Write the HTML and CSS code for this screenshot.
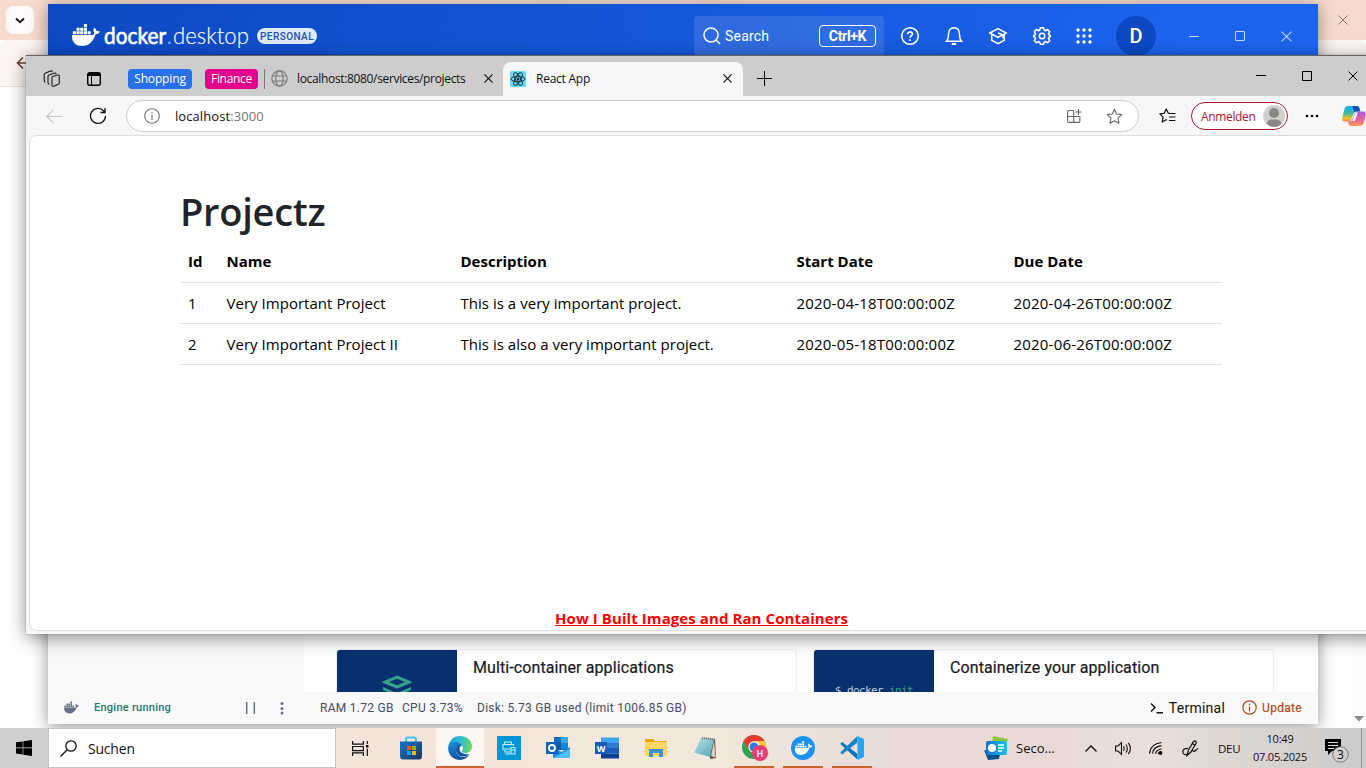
FILE: index.html
```html
<!DOCTYPE html>
<html lang="de">
<head>
<meta charset="utf-8">
<title>React App</title>
<link rel="stylesheet" href="styles.css">
</head>
<body>
<svg class="defs" width="0" height="0">
  <defs>
    <symbol id="whale" viewBox="0 0 28 24">
      <path d="M0 12h21c1-.6 1.400-1.400 1.300-2.200C21 8 21.200 6 22.400 4.800c1.400.8 2 2 2.100 3.200 1.300-.3 2.600 0 3.500.6-.7 1.700-2.200 2.600-4.400 2.700C21.400 18.500 17 23 10 23 3.600 23-.3 19.400 0 12z"/>
      <path d="M.8 8.300h3.100v3H.8zM4.500 8.300h3.100v3H4.500zM8.200 8.300h3.100v3H8.200zM11.900 8.300H15v3h-3.100zM15.600 8.300h3.100v3h-3.100zM4.500 4.700h3.100v3H4.500zM8.200 4.700h3.100v3H8.200zM11.900 4.700H15v3h-3.100zM11.900 1H15v3h-3.100z"/>
    </symbol>
    <symbol id="x" viewBox="0 0 10 10"><path d="M.5.5l9 9M9.500.5l-9 9" fill="none" stroke="currentColor"/></symbol>
  </defs>
</svg>
<div class="desktop">

  <div class="chrome">
    <div class="chrome-tabs">
      <span class="chrome-chevron"><svg width="10" height="7" viewBox="0 0 10 7"><path d="M1 1.500l4 3.700 4-3.700" fill="none" stroke="#1f1a1a" stroke-width="2"/></svg></span>
      <svg class="chrome-close" width="10" height="10"><use href="#x"/></svg>
    </div>
    <div class="chrome-bar">
      <svg width="14" height="14" viewBox="0 0 14 14"><path d="M14 7H2M7 1.500L1.500 7 7 12.500" fill="none" stroke="#6b4a40" stroke-width="1.700"/></svg>
    </div>
    <div class="chrome-page"><span class="chrome-scroll"><svg width="10" height="6"><path d="M0 0h10L5 5.500z" fill="#8a8a8a"/></svg></span></div>
  </div>

  <div class="docker">
    <header class="dk-head">
      <svg class="dk-logo" width="182" height="34" viewBox="0 0 182 34">
        <use href="#whale" x="0" y="4" width="28" height="24" fill="#fff"/>
        <g fill="#fff" class="logo-text">
          <text x="32" y="24.500" textLength="62" lengthAdjust="spacingAndGlyphs" class="logo-strong">docker</text>
          <text x="94.500" y="24.500" fill="#7fa8f5">.</text>
          <text x="101" y="24.500" textLength="76" lengthAdjust="spacingAndGlyphs">desktop</text>
        </g>
      </svg>
      <span class="dk-badge">PERSONAL</span>
      <div class="dk-search">
        <svg width="18" height="18" viewBox="0 0 18 18" fill="none" stroke="#fff" stroke-width="1.500"><circle cx="8" cy="8" r="7"/><path d="M13 13l4 4"/></svg>
        <span>Search</span><kbd>Ctrl+K</kbd>
      </div>
      <div class="dk-tools">
        <span class="dk-cell"><svg width="20" height="20" viewBox="0 0 20 20" fill="none" stroke="#fff" stroke-width="1.600"><circle cx="10" cy="10" r="8.300"/><path d="M7.600 8.200c0-3 4.800-3 4.800-.2 0 1.800-2.400 1.900-2.400 3.700M10 13.200V15"/></svg></span>
        <span class="dk-cell"><svg width="20" height="20" viewBox="0 0 20 20" fill="none" stroke="#fff" stroke-width="1.500"><path d="M2.500 15.200h15c-1.500-1.500-2-3-2-6.500 0-4.500-2.200-7-5.500-7s-5.500 2.500-5.500 7c0 3.500-.5 5-2 6.500z"/><path d="M7.800 18h4.400" stroke-width="2"/></svg></span>
        <span class="dk-cell"><svg width="20" height="20" viewBox="0 0 20 20" fill="none" stroke="#fff" stroke-width="1.500"><path d="M1.800 7L10 2.500 18.200 7 10 11.500zM3.700 8.500v5.700L10 17.700l6.300-3.500V8.500M10 7l5 2v3.500"/></svg></span>
        <span class="dk-cell"><svg width="20" height="20" viewBox="0 0 20 20" fill="none" stroke="#fff" stroke-width="1.600"><path d="M8.400 1.800h3.200l.6 2.300 1.300.6 2-1.200 2.200 2.300-1.200 2 .5 1.200 1.300.4v1.400l-1.300.5-.5 1.300 1.200 2-2.200 2.200-2-1.200-1.300.6-.6 2H8.400l-.6-2-1.300-.6-2 1.200-2.200-2.200 1.200-2-.5-1.300-1.300-.5V9.400L3 9l.5-1.200-1.200-2 2.200-2.300 2 1.200 1.300-.6z" stroke-linejoin="round"/><circle cx="10" cy="10" r="2.700"/></svg></span>
        <span class="dk-cell dk-grid"><svg width="16" height="16" viewBox="0 0 16 16" stroke="#fff" stroke-width="3.400" stroke-linecap="round" stroke-dasharray="0 6"><path d="M2 2h12.100M2 8h12.100M2 14h12.100"/></svg></span>
        <span class="dk-avatar">D</span>
        <span class="dk-win"><svg width="10" height="10"><path d="M0 5.500h10" stroke="#c3d6fb"/></svg></span>
        <span class="dk-win"><svg width="10" height="10"><path d="M.5.500h9v9h-9z" fill="none" stroke="#c3d6fb"/></svg></span>
        <span class="dk-win"><svg width="11" height="11"><use href="#x"/></svg></span>
      </div>
    </header>
    <div class="dk-body">
      <div class="dk-side"></div>
      <div class="dk-main">
        <div class="dk-card"><div class="dk-thumb"><svg width="30" height="24" viewBox="0 0 30 24"><path d="M15 2l12 5-12 5L3 7z" fill="none" stroke="#35a08c" stroke-width="3"/><path d="M1 12l14 6 14-6v3l-14 6-14-6z" fill="#35a08c"/></svg></div><h3>Multi-container applications</h3></div>
        <div class="dk-card"><div class="dk-thumb dk-code"><code>$ docker <b>init</b></code></div><h3>Containerize your application</h3></div>
      </div>
    </div>
    <footer class="dk-foot">
      <svg class="dk-mini" width="15" height="13" fill="#667085"><use href="#whale"/></svg>
      <span class="dk-engine">Engine running</span>
      <svg class="dk-pause" width="12" height="12"><path d="M1.700 0v12M9.300 0v12" stroke="#667085" stroke-width="1.500"/></svg>
      <svg class="dk-more" width="4" height="14" fill="#667085"><circle cx="2" cy="2.500" r="1.500"/><circle cx="2" cy="7.500" r="1.500"/><circle cx="2" cy="12" r="1.500"/></svg>
      <span class="dk-ram">RAM 1.72 GB</span><span class="dk-cpu">CPU 3.73%</span><span class="dk-disk">Disk: 5.73 GB used (limit 1006.85 GB)</span>
      <svg class="dk-prompt" width="13" height="12" viewBox="0 0 13 12"><path d="M1 1.500l4 4-4 4M6.500 10.700H13" fill="none" stroke="#111" stroke-width="1.400"/></svg>
      <span class="dk-term">Terminal</span>
      <svg class="dk-info" width="15" height="15" viewBox="0 0 15 15"><circle cx="7.500" cy="7.500" r="6.700" fill="none" stroke="#b54a16" stroke-width="1.200"/><path d="M7.500 6.500v5M7.500 3.800v1.500" stroke="#b54a16" stroke-width="1.300"/></svg>
      <span class="dk-update">Update</span>
    </footer>
  </div>

  <div class="edge">
    <div class="ed-tabs">
      <svg class="ed-work" width="18" height="18" viewBox="0 0 18 18" fill="none" stroke="#1a1a1a" stroke-width="1.100" stroke-linejoin="round"><path d="M9.500 6.500L14.300 5q2-.3 2 1.500v6.200q0 1-1 1.500l-4.500 2q-1.800.5-1.800-1.200V7.800q0-1 .5-1.300zM6.500 14.300q-1.500-.1-1.500-1.600V6.500q0-1.200 1-1.600L11.500 3q1.200-.2 1.700 1M2.500 12.200Q1.200 12 1.200 10.500V5q0-1.300 1.300-1.900L7.500 1q1.300-.4 1.900.8"/></svg>
      <svg class="ed-panel" width="14" height="14" viewBox="0 0 14 14"><rect x=".7" y=".7" width="12.600" height="12.600" rx="2" fill="none" stroke="#000" stroke-width="1.400"/><path d="M1 1h12v3H1z"/><path d="M4.500 4v9" stroke="#000"/></svg>
      <span class="ed-chip">Shopping</span><span class="ed-chip pink">Finance</span>
      <div class="ed-tab1">
        <svg width="17" height="17" viewBox="0 0 17 17" fill="none" stroke="#7d7d7d" stroke-width="1.200"><circle cx="8.500" cy="8.500" r="7.700"/><ellipse cx="8.500" cy="8.500" rx="3.700" ry="7.700"/><path d="M1.500 6h14M1.500 11h14"/></svg>
        <span class="ed-title">localhost:8080/services/projects</span>
        <svg class="ed-x" width="9" height="9"><use href="#x"/></svg>
      </div>
      <div class="ed-tab2">
        <svg width="16" height="16" viewBox="0 0 16 16"><rect width="16" height="16" rx="1.500" fill="#61dafb"/><g fill="none" stroke="#20363e" stroke-width="1"><ellipse cx="8" cy="8" rx="7" ry="2.700"/><ellipse cx="8" cy="8" rx="7" ry="2.700" transform="rotate(60 8 8)"/><ellipse cx="8" cy="8" rx="7" ry="2.700" transform="rotate(120 8 8)"/></g><circle cx="8" cy="8" r="1.500" fill="#20363e"/></svg>
        <span class="ed-title react">React App</span>
        <svg class="ed-x" width="9" height="9"><use href="#x"/></svg>
      </div>
      <svg class="ed-plus" width="15" height="15"><path d="M7.500 0v15M0 7.500h15" stroke="#000"/></svg>
      <div class="ed-controls">
        <svg width="10" height="10"><path d="M0 4.500h10" stroke="#000"/></svg>
        <svg width="10" height="10"><rect x=".5" y=".5" width="9" height="9" rx=".7" fill="none" stroke="#000" stroke-width="1.100"/></svg>
        <svg width="10" height="10"><use href="#x"/></svg>
      </div>
    </div>
    <div class="ed-bar">
      <svg class="ed-back" width="17" height="15" viewBox="0 0 17 15"><path d="M16.500 7.500H1M7.500.800L.8 7.500l6.700 6.700" fill="none" stroke="#c4c4c4" stroke-width="1.100"/></svg>
      <svg class="ed-reload" width="18" height="18" viewBox="0 0 18 18"><path d="M16.500 9a7.500 7.500 0 1 1-2-5.200l1.500 1.400M16 1v4.500h-4.500" fill="none" stroke="#111" stroke-width="1.300"/></svg>
      <div class="ed-url">
        <svg width="16" height="16" viewBox="0 0 16 16"><circle cx="8" cy="8" r="7.300" fill="none" stroke="#707070" stroke-width="1.100"/><path d="M8 7v5M8 4v1.500" stroke="#707070" stroke-width="1.200"/></svg>
        <span class="ed-host">localhost<i>:3000</i></span>
        <svg class="ed-app" width="15" height="15" viewBox="0 0 15 15" fill="none" stroke="#666" stroke-width="1.100"><path d="M6.500 1.500H2q-1.400 0-1.400 1.400V12q0 1.400 1.400 1.400h9.500q1.400 0 1.400-1.400V7.500M.6 7.500h12.300M6.700 1.500v12M11.500 0v6M8.500 3h6"/></svg>
        <svg class="ed-star" width="17" height="17" viewBox="0 0 17 17"><path d="M8.500 1.300l2.200 4.700 5 .6-3.700 3.500 1 5.100-4.500-2.500L4 15.200l1-5.100L1.300 6.600l5-.6z" fill="none" stroke="#666" stroke-width="1.100" stroke-linejoin="round"/></svg>
      </div>
      <svg class="ed-favs" width="17" height="16" viewBox="0 0 17 16" fill="none" stroke="#111" stroke-width="1.200"><path d="M10.500 5.500L9.300 5 7.200.900 5.200 5.300.8 5.800l3.300 3.300-.9 5 3.900-2.300.9.500" stroke-linejoin="round"/><path d="M10 5.500h6.500M10 9h6.500M10 12.500h6.500"/></svg>
      <div class="ed-login"><span>Anmelden</span><svg width="22" height="22" viewBox="0 0 22 22"><circle cx="11" cy="11" r="11" fill="#d2d0ce"/><circle cx="11" cy="8" r="5" fill="#8a8886"/><path d="M3.500 18.500q1.500-4 5-4h5q3.500 0 5 4Q15 22 11 22t-7.500-3.500z" fill="#8a8886"/></svg></div>
      <svg class="ed-dots" width="14" height="4"><circle cx="2" cy="2" r="1.300"/><circle cx="7" cy="2" r="1.300"/><circle cx="12" cy="2" r="1.300"/></svg>
      <svg class="ed-copilot" width="24" height="22" viewBox="0 0 24 22">
        <defs><linearGradient id="cpa" x1="0" y1="0" x2="0" y2="1"><stop offset="0" stop-color="#19aaf1"/><stop offset=".5" stop-color="#48b99b"/><stop offset=".8" stop-color="#f4c220"/><stop offset="1" stop-color="#f27844"/></linearGradient><linearGradient id="cpb" x1="0" y1="0" x2="0" y2="1"><stop offset="0" stop-color="#a95be8"/><stop offset=".55" stop-color="#ed5e9a"/><stop offset="1" stop-color="#fba24d"/></linearGradient></defs>
        <path d="M6.500 1H15q1.700 0 2.300 2l1 3.500h-4q-2 0-2.600 2L9.500 14q-.7 2.500-2.700 2.500H3q-3.500 0-2.700-4l2-8Q3 1 6.500 1z" fill="url(#cpa)"/><path d="M10.500 1H15q1.700 0 2.300 2l1 3.500h-4q-1.300 0-2 1z" fill="#1550c0"/>
        <path d="M17 6.500h4q3.500 0 2.700 4l-2 7.500q-1 3-4.200 3H9q-2 0-2.500-2l-.8-2.500h2q2 0 2.600-2l2.200-6Q13.500 6.500 17 6.500z" fill="url(#cpb)"/><path d="M13.500 7.500h2.300l-3 8.500h-2.900q.8-.5 1.200-2z" fill="#fff"/>
      </svg>
    </div>
    <main class="page">
      <h1>Projectz</h1>
      <table>
        <colgroup><col class="c1"><col class="c2"><col class="c3"><col class="c4"><col></colgroup>
        <thead><tr><th>Id</th><th>Name</th><th>Description</th><th>Start Date</th><th>Due Date</th></tr></thead>
        <tbody>
          <tr><td>1</td><td>Very Important Project</td><td>This is a very important project.</td><td class="date">2020-04-18T00:00:00Z</td><td class="date">2020-04-26T00:00:00Z</td></tr>
          <tr><td>2</td><td>Very Important Project II</td><td>This is also a very important project.</td><td class="date">2020-05-18T00:00:00Z</td><td class="date">2020-06-26T00:00:00Z</td></tr>
        </tbody>
      </table>
      <a class="page-link" href="#">How I Built Images and Ran Containers</a>
    </main>
  </div>

  <div class="taskbar">
    <div class="tb-start"><svg width="16" height="16" viewBox="0 0 16 16"><path d="M0 2.300l6.700-.9v6.200H0zM7.300 1.300L16 0v7.600H7.300zM0 8.300h6.700v6.200L0 13.600zM7.300 8.300H16V16l-8.700-1.300z"/></svg></div>
    <div class="tb-search"><svg width="17" height="17" viewBox="0 0 17 17" fill="none" stroke="#111" stroke-width="1.300"><circle cx="11" cy="6" r="5.200"/><path d="M7.200 9.800L.5 16.500"/></svg><span>Suchen</span></div>
    <div class="tb-apps">
      <span class="tb-app view"><svg width="17" height="17" viewBox="0 0 17 17" fill="none" stroke="#111" stroke-width="1.200"><path d="M.6 1v3.200h10.800V1M.6 16v-3.200h10.800V16M.6 6.500h10.800v4.200H.6zM15.300 1v3M15.300 8.500V16"/><path d="M14 5h2.500v2.500H14z" fill="#111" stroke="none"/></svg></span>
      <span class="tb-app"><svg width="24" height="24" viewBox="0 0 24 24"><defs><linearGradient id="st" x1="0" y1="0" x2="1" y2="1"><stop stop-color="#0b76c8"/><stop offset="1" stop-color="#23355e"/></linearGradient></defs><path d="M7 7V3q0-1.500 1.500-1.500h7Q17 1.500 17 3v4" fill="none" stroke="#3cc4f5" stroke-width="2"/><path d="M1 5.500h22V20q0 3.500-3 3.500H4q-3 0-3-3.500z" fill="url(#st)"/><path d="M8 10h4v4H8z" fill="#f25022"/><path d="M13 10h4v4h-4z" fill="#7fba00"/><path d="M8 15h4v4H8z" fill="#00a4ef"/><path d="M13 15h4v4h-4z" fill="#ffb900"/></svg></span>
      <span class="tb-app active"><svg width="24" height="24" viewBox="0 0 24 24"><defs><linearGradient id="eg" x1="0" y1=".4" x2="1" y2=".5"><stop stop-color="#1b9de2"/><stop offset=".5" stop-color="#2fc0d0"/><stop offset="1" stop-color="#69d858"/></linearGradient><linearGradient id="eb" x1="0" y1="0" x2=".6" y2="1"><stop stop-color="#1a92dd"/><stop offset="1" stop-color="#104a96"/></linearGradient></defs><path d="M.2 11C1 4.500 6 0 12 0c7 0 12 5 12 10.500 0 4-3 6.500-6.500 6.500-2.500 0-4-.9-3.600-2 1.500-1.600 1.400-3.500.1-5C10 5.500 3 6 .2 11z" fill="url(#eg)"/><path d="M.1 12.500C0 8 4 5.800 7.800 6c3 0 5.200 1.500 6.200 3.700-3.500-1-6.300 1.300-6 5.300.4 4.500 5.500 7 9 5.800q2-.6 4.300-2C19 22 15.700 24 12 24 5.500 24 .2 19 .1 12.500z" fill="url(#eb)"/><path d="M8 14c-.3-3 2-5.300 5.500-4.600-1 .5-2 1.700-2 3.600 0 3.500 4 5.700 9.800 5-4 4-12.800 3.700-13.300-4z" fill="#0c59a4"/></svg></span>
      <span class="tb-app"><svg width="24" height="24" viewBox="0 0 24 24"><path d="M0 0h24v24H0z" fill="#0096d6"/><path d="M7.500 8V6h7v2M13 16H8v-3h5M6 14.500V8.500h10.500V10M8.500 18H13M14 11.500h4v6.500h-4zM14 14h4" fill="none" stroke="#c9edfb" stroke-width="1.100"/></svg></span>
      <span class="tb-app"><svg width="24" height="24" viewBox="0 0 24 24"><path d="M8 1h14v13H8z" fill="#0f6cbd"/><path d="M15 1h7v6h-7z" fill="#35a9ee"/><path d="M8 7h7v7H8z" fill="#1257a3"/><path d="M15 7h7v6h-7z" fill="#1484d7"/><path d="M7 11l8.500 5L24 11v11H7z" fill="#1a8fe0"/><path d="M7 22l17-9v9z" fill="#4fc1f5"/><path d="M0 6h12v12H0z" fill="#0a64b8"/><circle cx="6" cy="12" r="3" fill="none" stroke="#fff" stroke-width="1.800"/></svg></span>
      <span class="tb-app"><svg width="24" height="24" viewBox="0 0 24 24"><path d="M6 1.500h18v5.500H6z" fill="#41a5ee"/><path d="M6 7h18v5H6z" fill="#2b7cd3"/><path d="M6 12h18v5.500H6z" fill="#185abd"/><path d="M6 17.500h18v5H6z" fill="#103f91"/><path d="M0 6h12v12H0z" fill="#185abd"/><text x="6" y="15.700" text-anchor="middle" fill="#fff" class="ico-text">W</text></svg></span>
      <span class="tb-app"><svg width="22" height="20" viewBox="0 0 22 20"><path d="M0 1h8l2 2h12v15H0z" fill="#e6a700"/><path d="M0 4h22v14H0z" fill="#ffd866"/><path d="M4 19v-8h14v8h-4v-4H8v4z" fill="#3c92d6"/></svg></span>
      <span class="tb-app"><svg width="24" height="24" viewBox="0 0 24 24"><defs><linearGradient id="np" x1="0" y1="0" x2="1" y2="1"><stop stop-color="#c2e4e9"/><stop offset="1" stop-color="#4da4b4"/></linearGradient></defs><path d="M9 2l13 1 1 19-6 1z" fill="#57534b"/><path d="M21 5l1.500 16.500L18 20z" fill="#d9d2c2"/><path d="M8 2l13 1-4 18L1 17z" fill="url(#np)"/><path d="M1 17l16 4v2L1 18.500z" fill="#f0f0ea"/><path d="M9 2l13 1.500" stroke="#76736c" stroke-dasharray="1 1" stroke-width="2"/></svg></span>
      <span class="tb-app run"><svg width="28" height="26" viewBox="0 0 28 26"><g transform="translate(2)"><circle cx="12" cy="12" r="12" fill="#31a350"/><path d="M1.600 6A12 12 0 0 1 22.400 6H12L7 15z" fill="#e33b2e"/><path d="M12 6h10.400A12 12 0 0 1 12 24l5-9z" fill="#fcc934"/><circle cx="12" cy="12" r="5.700" fill="#fff"/><circle cx="12" cy="12" r="4.500" fill="#2f79e8"/></g><circle cx="20" cy="18" r="8" fill="#e83b72"/><text x="20" y="21.500" text-anchor="middle" fill="#fff" class="ico-small">H</text></svg></span>
      <span class="tb-app run"><svg width="24" height="24" viewBox="0 0 24 24"><circle cx="12" cy="12" r="12" fill="#1d91ee"/><use href="#whale" x="3.500" y="4.500" width="18" height="15" fill="#fff"/></svg></span>
      <span class="tb-app run"><svg width="24" height="24" viewBox="0 0 24 24"><path d="M2 6l15.500 12v5.500L.3 8z" fill="#0075b7"/><path d="M17.500 0v6.500L2 18.500.3 16.500z" fill="#1585c9"/><path d="M17.500 0L24 3v18l-6.500 3z" fill="#26a5f2"/></svg></span>
    </div>
    <div class="tb-tray">
      <svg class="tr-news" width="25" height="24" viewBox="0 0 25 24"><path d="M9 0l15 3-4 14-13-3z" fill="#8cc63f"/><path d="M0 14l16 4-1 5-11 1z" fill="#0c4e86"/><defs><linearGradient id="nw" x1="0" x2="1"><stop stop-color="#0d70d1"/><stop offset="1" stop-color="#1dc1ec"/></linearGradient></defs><rect x="2" y="5" width="21" height="14" rx="2" fill="url(#nw)"/><circle cx="8" cy="12" r="4" fill="#fff"/><path d="M14 9h6M14 12h6M14 15h4" stroke="#fff" stroke-width="1.300"/></svg>
      <span class="tr-text">Seco...</span>
      <svg class="tr-up" width="12" height="7" viewBox="0 0 12 7"><path d="M.5 6.500L6 1l5.500 5.500" fill="none" stroke="#111" stroke-width="1.300"/></svg>
      <svg class="tr-vol" width="17" height="15" viewBox="0 0 17 15" fill="none" stroke="#111" stroke-width="1.100"><path d="M.6 5h2.500l3.400-3.500v12L3.100 10H.6zM8.500 5.200q1.500 2.300 0 4.600M11 3.500q2.700 4 0 8M13.300 1.800q4.200 5.700 0 11.400"/></svg>
      <svg class="tr-net" width="14" height="14" viewBox="0 0 14 14" fill="none" stroke="#111" stroke-width="1.200"><path d="M.5 12.500Q1 3 12.500 1.500M3.500 12.500Q4 6 12.500 4.700M6.500 12.700Q7 9 12.500 8M9 13q.3-2 3.500-2"/><circle cx="11.500" cy="12" r="1.300" fill="#111"/></svg>
      <svg class="tr-pen" width="17" height="17" viewBox="0 0 17 17" fill="none" stroke="#111" stroke-width="1.200"><path d="M5 15.500L6.500 10l5-8.500q1.500-1.300 2.500 0 .6 1-.3 2.500L8.700 12.300zM6 8.300Q.5 8.300.8 12q.4 3 3.700 2.500M10.300 10.200q1.500 2.300 3.200.3t2.700-1.700M10.500 3.500l3 2"/></svg>
      <span class="tr-lang">DEU</span>
      <span class="tr-clock"><span>10:49</span><span>07.05.2025</span></span>
      <svg class="tr-note" width="26" height="26" viewBox="0 0 26 26"><path d="M1 1h16v12H8l-4 4v-4H1z"/><path d="M4 4.500h10M4 7.500h10M4 10.500h6" stroke="#ddd"/><circle cx="16.500" cy="16.500" r="7.700" fill="#d2d0cf" stroke="#777"/><text x="16.500" y="21" text-anchor="middle" class="note-text">3</text></svg>
      <span class="tr-end"></span>
    </div>
  </div>
</div>
</body>
</html>
```

FILE: styles.css
```css
* { box-sizing: border-box; }
body { margin: 0; font-family: "Open Sans", "Noto Sans", sans-serif; }
svg { display: block; flex: none; }
.defs { position: absolute; }
.desktop { position: relative; width: 1366px; height: 768px; overflow: hidden; background: #fff; white-space: nowrap; }

/* background browser */
.chrome { position: absolute; inset: 0 0 40px 0; display: flex; flex-direction: column; }
.chrome-tabs { height: 40px; background: #f6dacd; display: flex; align-items: center; justify-content: space-between; padding: 0 18px 0 6px; }
.chrome-chevron { width: 28px; height: 28px; border-radius: 8px; background: #fffaf9; display: flex; align-items: center; justify-content: center; }
.chrome-close { color: #8a7a74; }
.chrome-bar { height: 47px; background: #fdf5f2; border-bottom: 1px solid #f5dfd5; border-radius: 8px 8px 0 0; display: flex; align-items: center; padding-left: 16px; }
.chrome-page { flex: 1; display: flex; justify-content: flex-end; }
.chrome-scroll { width: 15px; background: #fcfcfc; display: flex; align-items: flex-end; justify-content: center; padding-bottom: 6px; }

/* docker window */
.docker { position: absolute; left: 48px; top: 4px; width: 1270px; height: 720px; display: flex; flex-direction: column; background: #fff; box-shadow: 0 3px 16px rgba(0,0,0,.42); font-family: Roboto, sans-serif; }
.dk-head { height: 64px; background: linear-gradient(100deg, #0c49c2, #1d63ed 90%); display: flex; align-items: center; padding: 0 9px 0 24px; color: #fff; }
.dk-logo { overflow: visible; }
.logo-text { font: 300 23px Lato, sans-serif; stroke: #fff; stroke-width: .15px; }
.logo-strong { font-weight: 400; stroke-width: .65px; }
.dk-badge { margin-left: 3px; width: 60px; height: 16px; border-radius: 8px; background: #dfeafc; color: #1d4fb5; font-size: 10px; font-weight: 500; letter-spacing: .45px; line-height: 17px; text-align: center; }
.dk-search { margin-left: 377px; width: 190px; height: 40px; border-radius: 4px; background: rgba(255,255,255,.11); display: flex; align-items: center; padding: 0 8px 1px 9px; font-size: 14px; }
.dk-search span { margin-left: 4px; letter-spacing: .2px; }
.dk-search kbd { margin-left: auto; width: 57px; height: 22px; border: 1px solid #fff; border-radius: 4px; font: 700 14px/20px Roboto, sans-serif; letter-spacing: -.3px; text-align: center; }
.dk-tools { margin-left: 4px; display: flex; align-items: center; }
.dk-cell { width: 44px; display: flex; justify-content: center; }
.dk-grid { width: 40px; }
.dk-avatar { margin: 0 15px 0 12px; width: 40px; height: 40px; border-radius: 50%; background: #0c49c2; font-size: 20px; font-weight: 500; line-height: 41px; text-align: center; }
.dk-win { width: 46px; display: flex; justify-content: center; color: #c3d6fb; }
.dk-body { flex: 1; display: flex; }
.dk-side { width: 256px; background: #f9f9fa; }
.dk-main { flex: 1; display: flex; gap: 16px; align-items: flex-end; padding-left: 32px; }
.dk-card { width: 461px; height: 43px; border: 1px solid #eee; border-bottom: 0; border-radius: 4px 4px 0 0; display: flex; }
.dk-thumb { width: 120px; height: 42px; border-radius: 3px 0 0 0; background: #06316e; overflow: hidden; display: flex; justify-content: center; padding-top: 25px; }
.dk-code { padding-top: 33px; }
.dk-thumb code { font: 11px/16px "DejaVu Sans Mono", monospace; color: #c3cede; letter-spacing: -.6px; }
.dk-thumb b { font-weight: 400; color: #35a08c; }
.dk-card h3 { margin: 7px 0 0 16px; font-size: 16px; font-weight: 400; line-height: 22px; color: #17191e; letter-spacing: .1px; -webkit-text-stroke: .2px #17191e; }
.dk-foot { height: 32px; background: #f9f9fa; display: flex; align-items: center; padding: 0 16px 1px; color: #444e5c; font-size: 12px; }
.dk-engine { margin-left: 15px; width: 151px; color: #27786f; font-size: 11px; font-weight: 500; letter-spacing: .25px; }
.dk-more { margin-left: 23px; }
.dk-ram { margin-left: 36px; width: 82px; letter-spacing: .27px; }
.dk-cpu { width: 75px; letter-spacing: .27px; }
.dk-disk { letter-spacing: .27px; }
.dk-prompt { margin-left: auto; }
.dk-term { margin-left: 6px; font-size: 14px; color: #111; letter-spacing: .25px; }
.dk-info { margin-left: 17px; }
.dk-update { margin-left: 5px; color: #b54a16; letter-spacing: .3px; -webkit-text-stroke: .2px #b54a16; }

/* foreground browser */
.edge { position: absolute; left: 26px; top: 55px; width: 1360px; height: 579px; background: #f7f7f7; border-top: 1px solid #646464; box-shadow: 0 4px 17px rgba(0,0,0,.45), 0 0 1px rgba(0,0,0,.4); display: flex; flex-direction: column; }
.ed-tabs { height: 40px; flex: none; background: #cdcdcd; display: flex; align-items: center; padding-top: 5px; }
.ed-work { margin-left: 17px; }
.ed-panel { margin-left: 26px; }
.ed-chip { height: 20px; width: 64px; margin-left: 27px; border-radius: 4px; background: #2870ea; color: #fff; font-size: 12px; line-height: 20px; text-align: center; letter-spacing: -.15px; }
.ed-chip.pink { width: 53px; margin-left: 13px; background: #e3008c; letter-spacing: -.3px; }
.ed-tab1 { margin-left: 6px; width: 239px; height: 20px; border-left: 1px solid #777; display: flex; align-items: center; padding: 0 10px 0 6px; }
.ed-title { margin-left: 9px; font-size: 12px; color: #111; letter-spacing: -.34px; }
.ed-x { margin-left: auto; color: #111; stroke-width: 1.3; }
.ed-tab2 { width: 240px; height: 34px; background: #f7f7f7; border-radius: 8px 8px 0 0; display: flex; align-items: center; padding: 0 11px 1px 7px; align-self: flex-end; }
.ed-title.react { margin-left: 10px; letter-spacing: -.25px; }
.ed-plus { margin-left: 14px; }
.ed-controls { margin: -5px 0 0 484px; display: flex; gap: 36px; }
.ed-bar { height: 39px; flex: none; display: flex; align-items: center; padding-top: 1px; }
.ed-back { margin-left: 20px; }
.ed-reload { margin-left: 26px; }
.ed-url { margin-left: 19px; width: 1013px; height: 32px; border: 1px solid #cdcdcd; border-radius: 16px; background: #fff; display: flex; align-items: center; padding: 0 15px 0 17px; }
.ed-host { margin-left: 15px; font-size: 13px; letter-spacing: .08px; color: #111; }
.ed-host i { font-style: normal; color: #777; }
.ed-app { margin-left: auto; }
.ed-star { margin-left: 24px; }
.ed-favs { margin-left: 20px; }
.ed-login { margin-left: 15px; width: 97px; height: 28px; border: 1px solid #ad1a22; border-radius: 14px; color: #ad1a22; font-size: 12px; letter-spacing: -.35px; display: flex; align-items: center; justify-content: space-between; padding: 0 2px 0 9px; background: #fff; }
.ed-dots { margin-left: 17px; }
.ed-copilot { margin-left: 23px; }
.page { margin-left: 3px; height: 496px; flex: none; border: 1px solid #dedede; border-radius: 8px; background: #fff; padding: 46px 0 0 150px; display: flex; flex-direction: column; align-items: flex-start; }
.page h1 { margin: 0 0 1px; font-size: 38px; line-height: 58px; font-weight: 600; color: #212529; letter-spacing: -.25px; }
table { width: 1042px; table-layout: fixed; border-collapse: collapse; font-size: 15px; color: #000; letter-spacing: .03px; }
.c1 { width: 38.500px; } .c2 { width: 234px; } .c3 { width: 336px; } .c4 { width: 217px; }
th, td { height: 41px; padding: 0 8px; text-align: left; border-bottom: 1px solid #dee2e6; line-height: 24px; }
th { font-weight: 700; letter-spacing: 0; }
.date { letter-spacing: .2px; }
.page-link { margin: auto 0 0 375px; font-size: 15px; font-weight: 700; line-height: 24px; color: #f00; letter-spacing: .08px; }

/* taskbar */
.taskbar { position: absolute; left: 0; top: 728px; width: 1366px; height: 40px; display: flex; background: linear-gradient(90deg, #f5e4d9 25%, #f3e8dc 52%, #e8d9d6 67%, #e9dad7 77%, #ecdfd9 84%, #dcd6d2 91%, #cacaca); color: #111; }
.tb-start { width: 48px; background: #d0d0d0; display: flex; align-items: center; justify-content: center; }
.tb-search { width: 288px; border: 1px solid #c5c5c5; background: #fff; display: flex; align-items: center; padding-left: 11px; font-size: 14px; }
.tb-search span { margin-left: 11px; letter-spacing: -.2px; }
.tb-apps { display: flex; gap: 1px; }
.tb-app { width: 48px; height: 40px; display: flex; align-items: center; justify-content: center; }
.tb-app.view { width: 50px; padding-right: 2px; }
.tb-app.active { background: #fbf6f1; border-bottom: 2px solid #cb632d; padding-top: 2px; }
.tb-app.run { width: 40px; margin: 0 4px; border-bottom: 2px solid #cb632d; padding-top: 2px; }
.tb-tray { margin-left: auto; width: 382px; display: flex; align-items: center; font-size: 12px; }
.tr-text { margin-left: 7px; width: 69px; font-size: 13px; }
.tr-vol { margin-left: 18px; }
.tr-net { margin-left: 17px; }
.tr-pen { margin-left: 19px; }
.tr-lang { margin-left: 19px; width: 35px; font-size: 11.500px; letter-spacing: -.3px; }
.tr-clock { width: 54px; display: flex; flex-direction: column; align-items: center; line-height: 18px; font-size: 11px; letter-spacing: -.2px; }
.tr-note { margin-left: 17px; margin-top: 5px; }
.tr-end { margin-left: auto; width: 5px; height: 40px; border-left: 1px solid #999; }
.ico-text { font: 700 9px "Open Sans", sans-serif; }
.ico-small { font: 500 9px Roboto, sans-serif; }
.note-text { font: 12px "Open Sans", sans-serif; }
```
